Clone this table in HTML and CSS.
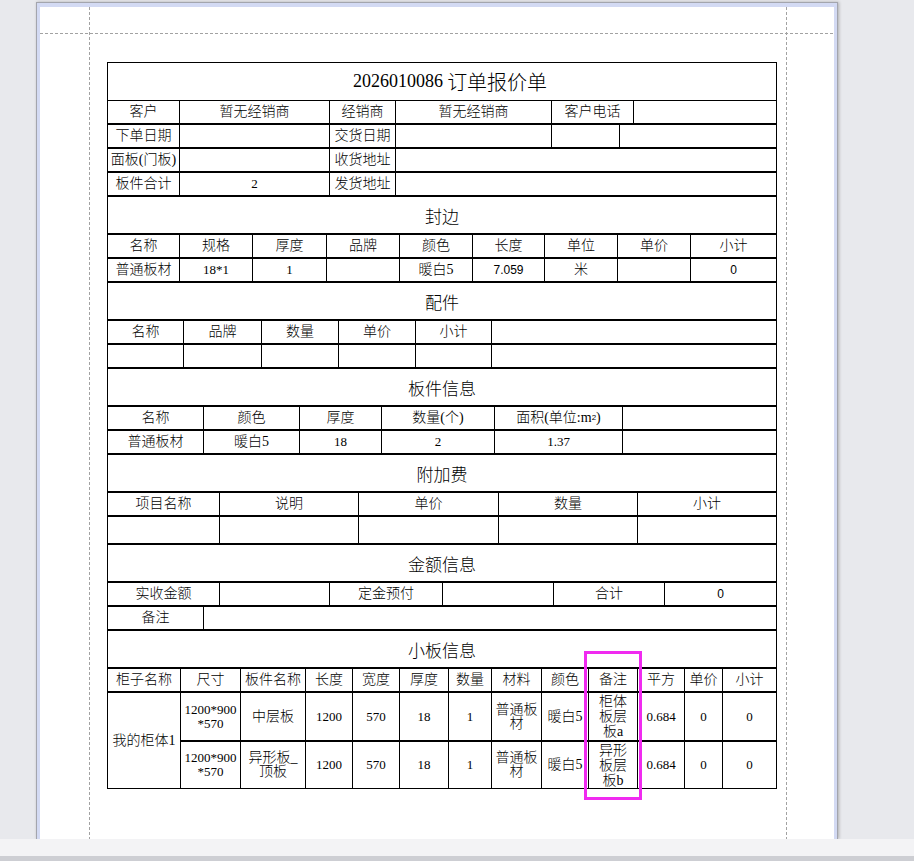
FILE: index.html
```html
<!DOCTYPE html>
<html lang="zh-CN">
<head>
<meta charset="utf-8">
<title>订单报价单</title>
<link rel="stylesheet" href="styles.css">
</head>
<body>
<div class="stage">
  <div class="page">
    <div class="sheet">
      <div class="guide guide-v guide-left"></div>
      <div class="guide guide-v guide-right"></div>
      <div class="guide guide-h"></div>

      <div class="quote">
        <div class="line caption caption-first">
          <span class="title-num">2026010086</span>&nbsp;<span class="title-cjk">订单报价单</span>
        </div>
        <div class="line attached c-customer">
          <div class="cell">客户</div><div class="cell">暂无经销商</div><div class="cell">经销商</div><div class="cell">暂无经销商</div><div class="cell">客户电话</div><div class="cell"></div>
        </div>
        <div class="line c-dates">
          <div class="cell">下单日期</div><div class="cell"></div><div class="cell">交货日期</div><div class="cell"></div><div class="cell"></div><div class="cell"></div>
        </div>
        <div class="line c-addr">
          <div class="cell">面板(门板)</div><div class="cell"></div><div class="cell">收货地址</div><div class="cell"></div>
        </div>
        <div class="line c-addr">
          <div class="cell">板件合计</div><div class="cell num">2</div><div class="cell">发货地址</div><div class="cell"></div>
        </div>

        <div class="line caption">封边</div>
        <div class="line c-edge">
          <div class="cell">名称</div><div class="cell">规格</div><div class="cell">厚度</div><div class="cell">品牌</div><div class="cell">颜色</div><div class="cell">长度</div><div class="cell">单位</div><div class="cell">单价</div><div class="cell">小计</div>
        </div>
        <div class="line c-edge">
          <div class="cell">普通板材</div><div class="cell num">18*1</div><div class="cell num">1</div><div class="cell"></div><div class="cell">暖白5</div><div class="cell sans">7.059</div><div class="cell">米</div><div class="cell"></div><div class="cell sans">0</div>
        </div>

        <div class="line caption">配件</div>
        <div class="line c-parts">
          <div class="cell">名称</div><div class="cell">品牌</div><div class="cell">数量</div><div class="cell">单价</div><div class="cell">小计</div><div class="cell"></div>
        </div>
        <div class="line c-parts">
          <div class="cell"></div><div class="cell"></div><div class="cell"></div><div class="cell"></div><div class="cell"></div><div class="cell"></div>
        </div>

        <div class="line caption">板件信息</div>
        <div class="line c-board">
          <div class="cell">名称</div><div class="cell">颜色</div><div class="cell">厚度</div><div class="cell">数量(个)</div><div class="cell">面积(单位:m<sup class="sq">2</sup>)</div><div class="cell"></div>
        </div>
        <div class="line c-board">
          <div class="cell">普通板材</div><div class="cell">暖白5</div><div class="cell num">18</div><div class="cell num">2</div><div class="cell num">1.37</div><div class="cell"></div>
        </div>

        <div class="line caption">附加费</div>
        <div class="line c-fee">
          <div class="cell">项目名称</div><div class="cell">说明</div><div class="cell">单价</div><div class="cell">数量</div><div class="cell">小计</div>
        </div>
        <div class="line c-fee tall">
          <div class="cell"></div><div class="cell"></div><div class="cell"></div><div class="cell"></div><div class="cell"></div>
        </div>

        <div class="line caption">金额信息</div>
        <div class="line c-amount">
          <div class="cell">实收金额</div><div class="cell"></div><div class="cell">定金预付</div><div class="cell"></div><div class="cell">合计</div><div class="cell sans">0</div>
        </div>
        <div class="line c-note">
          <div class="cell">备注</div><div class="cell"></div>
        </div>

        <div class="line caption">小板信息</div>
        <div class="line c-small">
          <div class="cell">柜子名称</div><div class="cell">尺寸</div><div class="cell">板件名称</div><div class="cell">长度</div><div class="cell">宽度</div><div class="cell">厚度</div><div class="cell">数量</div><div class="cell">材料</div><div class="cell">颜色</div><div class="cell">备注</div><div class="cell">平方</div><div class="cell">单价</div><div class="cell">小计</div>
        </div>
        <div class="line c-small small-data">
          <div class="cell merged">我的柜体1</div>
          <div class="cell num">1200*900<wbr>*570</div><div class="cell">中层板</div><div class="cell num">1200</div><div class="cell num">570</div><div class="cell num">18</div><div class="cell num">1</div><div class="cell">普通板材</div><div class="cell">暖白5</div><div class="cell memo">柜体板层板a</div><div class="cell num">0.684</div><div class="cell num">0</div><div class="cell num">0</div>
          <div class="cell num second">1200*900<wbr>*570</div><div class="cell second">异形板_顶板</div><div class="cell num second">1200</div><div class="cell num second">570</div><div class="cell num second">18</div><div class="cell num second">1</div><div class="cell second">普通板材</div><div class="cell second">暖白5</div><div class="cell memo second">异形板层板b</div><div class="cell num second">0.684</div><div class="cell num second">0</div><div class="cell num second">0</div>
        </div>
      </div>

      <div class="highlight"></div>
    </div>
  </div>
</div>
<div class="statusbar"></div>
<div class="bottom-edge"></div>
</body>
</html>
```

FILE: styles.css
```css
* {
  box-sizing: border-box;
  margin: 0;
  padding: 0;
}

html,
body {
  width: 914px;
  height: 861px;
  overflow: hidden;
}

body {
  background: #e8e9ed;
  color: #000;
  font-family: "Liberation Serif", "Noto Sans CJK SC", serif;
  display: flex;
  flex-direction: column;
}

.stage {
  flex: none;
  height: 839px;
  padding: 2px 0 0 36px;
  overflow: hidden;
}

.page {
  width: 802px;
  height: 100%;
  border: 1px solid #a3a5ad;
  border-bottom: none;
  background: #d3daf3;
  padding: 4px 3px 0 3px;
  box-shadow: 1px 0 3px rgba(0, 0, 0, 0.25);
}

.sheet {
  position: relative;
  height: 100%;
  background: #fff;
  padding: 55px 0 0 67px;
}

.guide {
  position: absolute;
}

.guide-v {
  top: 0;
  bottom: 0;
  width: 1px;
  background: repeating-linear-gradient(to bottom, #a2a2a2 0 3px, transparent 3px 5px);
}

.guide-left {
  left: 49px;
}

.guide-right {
  left: 746px;
}

.guide-h {
  top: 26px;
  left: 0;
  right: 0;
  height: 1px;
  background: repeating-linear-gradient(to right, #a2a2a2 0 3px, transparent 3px 5px);
}

.quote {
  width: 670px;
  display: flex;
  flex-direction: column;
}

.line {
  display: grid;
  height: 24px;
  border: 1px solid #000;
}

.line.attached {
  border-top: none;
  height: 23px;
}

.line.tall {
  height: 28px;
}

.caption {
  display: flex;
  align-items: center;
  justify-content: center;
  height: 38px;
  font-size: 17px;
  font-weight: 300;
}

.caption-first {
  height: 39px;
  padding-left: 16px;
}

.title-num {
  font-size: 18px;
}

.title-cjk {
  font-size: 20px;
}

.cell {
  display: flex;
  align-items: center;
  justify-content: center;
  text-align: center;
  border-left: 1px solid #000;
  padding: 0 1px;
  font-size: 14px;
  font-weight: 300;
  line-height: 14px;
  white-space: normal;
}

.cell:first-child {
  border-left: none;
}

.num {
  font-size: 13px;
}

.sans {
  font-family: "Liberation Sans", "Noto Sans CJK SC", sans-serif;
  font-size: 12px;
}

.sq {
  font-family: "Liberation Sans", sans-serif;
  font-size: 8px;
  line-height: 0;
  vertical-align: 5px;
}

.c-customer {
  grid-template-columns: 71px 150px 66px 156px 82px 143px;
}

.c-dates {
  grid-template-columns: 71px 150px 66px 156px 68px 157px;
}

.c-addr {
  grid-template-columns: 71px 150px 66px 381px;
}

.c-edge {
  grid-template-columns: 71px 73px 74px 73px 73px 72px 73px 73px 86px;
}

.c-parts {
  grid-template-columns: 75px 78px 77px 77px 76px 285px;
}

.c-board {
  grid-template-columns: 95px 96px 82px 113px 128px 154px;
}

.c-fee {
  grid-template-columns: 111px 139px 140px 139px 139px;
}

.c-amount {
  grid-template-columns: 111px 110px 113px 111px 111px 112px;
}

.c-note {
  grid-template-columns: 95px 573px;
}

.c-small {
  grid-template-columns: 72px 60px 65px 47px 47px 49px 43px 50px 47px 49px 47px 38px 54px;
}

.small-data {
  height: 97px;
  grid-template-rows: 47px 48px;
}

.merged {
  grid-row: span 2;
}

.second {
  border-top: 2px solid #000;
}

.memo {
  padding: 0 4px;
  line-height: 15px;
}

.highlight {
  position: absolute;
  left: 544px;
  top: 644px;
  width: 58px;
  height: 149px;
  border: 3px solid #f02af0;
}

.statusbar {
  flex: none;
  height: 17px;
  background: #f3f3f5;
}

.bottom-edge {
  flex: none;
  height: 5px;
  background: #cdced3;
}
```
